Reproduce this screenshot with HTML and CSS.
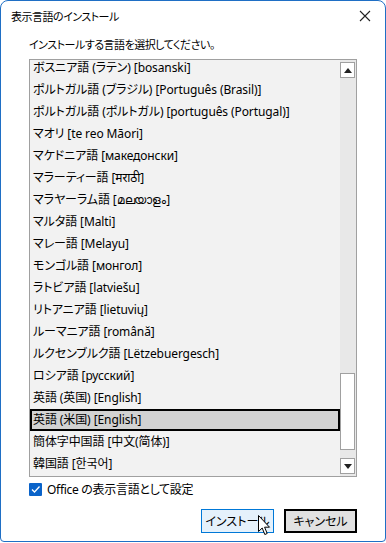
FILE: index.html
```html
<!DOCTYPE html>
<html lang="ja">
<head>
    <meta charset="UTF-8">
    <meta name="viewport" content="width=device-width, initial-scale=1.0">
    <title>表示言語のインストール</title>
    <link rel="stylesheet" href="styles.css">
</head>
<body>

<div class="window">
    <div class="titlebar">
        <span class="title">表示言語のインストール</span>
        <svg class="close" width="12" height="12" viewBox="0 0 12 12">
            <path d="M1 1 L11 11 M11 1 L1 11" stroke="#222" stroke-width="1.1" fill="none"/>
        </svg>
    </div>

    <div class="content">
        <div class="prompt">インストールする言語を選択してください。</div>

        <!-- 言語リスト -->
        <div class="listbox">
            <div class="items">
                <div class="items-inner">
                    <div class="item">ボスニア語 (ラテン) [bosanski]</div>
                    <div class="item">ポルトガル語 (ブラジル) [Português (Brasil)]</div>
                    <div class="item">ポルトガル語 (ポルトガル) [português (Portugal)]</div>
                    <div class="item">マオリ [te reo Māori]</div>
                    <div class="item">マケドニア語 [македонски]</div>
                    <div class="item">マラーティー語 [मराठी]</div>
                    <div class="item">マラヤーラム語 [മലയാളം]</div>
                    <div class="item">マルタ語 [Malti]</div>
                    <div class="item">マレー語 [Melayu]</div>
                    <div class="item">モンゴル語 [монгол]</div>
                    <div class="item">ラトビア語 [latviešu]</div>
                    <div class="item">リトアニア語 [lietuvių]</div>
                    <div class="item">ルーマニア語 [română]</div>
                    <div class="item">ルクセンブルク語 [Lëtzebuergesch]</div>
                    <div class="item">ロシア語 [русский]</div>
                    <div class="item">英語 (英国) [English]</div>
                    <div class="item selected">英語 (米国) [English]</div>
                    <div class="item">簡体字中国語 [中文(简体)]</div>
                    <div class="item">韓国語 [한국어]</div>
                </div>
            </div>
            <div class="scrollbar">
                <div class="sb-btn">
                    <svg width="8" height="5" viewBox="0 0 8 5"><path d="M0 5 L4 0 L8 5 Z" fill="#222"/></svg>
                </div>
                <div class="sb-track">
                    <div class="sb-thumb"></div>
                </div>
                <div class="sb-btn">
                    <svg width="8" height="5" viewBox="0 0 8 5"><path d="M0 0 L8 0 L4 5 Z" fill="#222"/></svg>
                </div>
            </div>
        </div>

        <label class="check-row">
            <span class="checkbox">
                <svg width="11" height="11" viewBox="0 0 11 11"><path d="M2 5.5 L4.5 8 L9.5 2.5" stroke="#fff" stroke-width="1.3" fill="none"/></svg>
            </span>
            <span class="check-label">Office の表示言語として設定</span>
        </label>

        <div class="buttons">
            <button class="btn btn-install">インストール</button>
            <button class="btn btn-cancel">キャンセル</button>
        </div>
    </div>

    <!-- マウスカーソル -->
    <svg class="cursor" width="13" height="21" viewBox="0 0 13 21">
        <path d="M0.5 0.5 L0.5 16.5 L4.2 13 L6.8 19.5 L9.2 18.5 L6.6 12.2 L11.5 12.2 Z" fill="#fff" stroke="#000" stroke-width="1"/>
    </svg>
</div>

</body>
</html>
```

FILE: styles.css
```css
body {
    margin: 0;
    background-color: #ffffff;
    font-family: "Noto Sans", "Noto Sans CJK JP", sans-serif;
    font-size: 12px;
    color: #000;
    font-feature-settings: "palt";
}

.window {
    position: relative;
    width: 386px;
    height: 542px;
    box-sizing: border-box;
    border: 1px solid #1f6fc5;
    border-radius: 8px 8px 4px 4px;
    background-color: #ffffff;
}

.titlebar {
    height: 30px;
    display: flex;
    align-items: center;
    justify-content: space-between;
    padding: 0 14px 0 10px;
}

.title {
    font-size: 11px;
    letter-spacing: -0.5px;
}

.content {
    padding: 0 28px;
}

.prompt {
    margin-top: 5px;
    line-height: 18px;
    font-size: 11px;
    letter-spacing: -0.5px;
}

.listbox {
    margin-top: 5px;
    height: 418px;
    box-sizing: border-box;
    border: 1px solid #a0a0a0;
    background-color: #f2f2f2;
    display: flex;
}

.items {
    flex: 1;
    overflow: hidden;
}

.items-inner {
    margin-top: -3px;
}

.item {
    height: 22px;
    line-height: 22px;
    padding-left: 3px;
    box-sizing: border-box;
    white-space: nowrap;
    letter-spacing: -0.1px;
}

.item.selected {
    border: 2px solid #000;
    background-color: #d2d2d2;
    line-height: 18px;
    padding-left: 1px;
}

.scrollbar {
    width: 16px;
    background-color: #e8e8e8;
    display: flex;
    flex-direction: column;
    padding: 2px 0;
}

.sb-btn {
    width: 15px;
    height: 16px;
    box-sizing: border-box;
    border: 1px solid #a0a0a0;
    background-color: #fff;
    display: flex;
    align-items: center;
    justify-content: center;
}

.sb-track {
    flex: 1;
    display: flex;
    flex-direction: column;
}

.sb-thumb {
    margin-top: auto;
    margin-bottom: 8px;
    width: 15px;
    height: 77px;
    box-sizing: border-box;
    border: 1px solid #a0a0a0;
    background-color: #fff;
}

.check-row {
    margin-top: 6px;
    display: flex;
    align-items: center;
    gap: 5px;
    height: 13px;
    line-height: 13px;
}

.check-label {
    letter-spacing: -0.3px;
}

.checkbox {
    width: 13px;
    height: 13px;
    background-color: #0a63c9;
    border-radius: 1px;
    display: flex;
    align-items: center;
    justify-content: center;
}

.buttons {
    margin-top: 13px;
    display: flex;
    justify-content: flex-end;
    gap: 10px;
}

.btn {
    width: 73px;
    height: 24px;
    box-sizing: border-box;
    font-family: inherit;
    font-size: 12px;
    font-feature-settings: "palt";
    padding: 0;
    color: #000;
}

.btn-install {
    background-color: #e5f1fb;
    border: 1px solid #0078d7;
}

.btn-cancel {
    background-color: #e1e1e1;
    border: 2px solid #000;
}

.cursor {
    position: absolute;
    left: 257px;
    top: 514px;
}
```
